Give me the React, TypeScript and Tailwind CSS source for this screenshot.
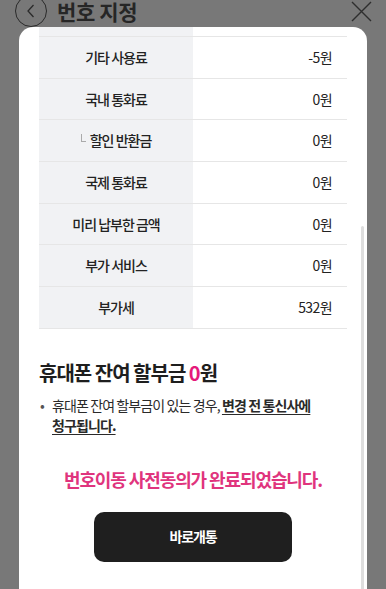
import React from "react";

const rows: { label: string; value: string; sub?: boolean }[] = [
  { label: "기타 사용료", value: "-5원" },
  { label: "국내 통화료", value: "0원" },
  { label: "할인 반환금", value: "0원", sub: true },
  { label: "국제 통화료", value: "0원" },
  { label: "미리 납부한 금액", value: "0원" },
  { label: "부가 서비스", value: "0원" },
  { label: "부가세", value: "532원" },
];

export default function App() {
  return (
    <div className="w-[386px] h-[589px] overflow-hidden bg-[#787878] font-['Noto_Sans_CJK_KR','Noto_Sans',sans-serif] text-[#222]">
      {/* page header under the dim overlay */}
      <div className="h-[22px] flex items-center pl-[15px] pr-[14px]">
        <div className="w-[32px] h-[32px] shrink-0 rounded-full border border-[#2a2a2a] flex items-center justify-center">
          <svg width="10" height="14" viewBox="0 0 10 14" fill="none">
            <path d="M7.5 1L2 7l5.5 6" stroke="#2a2a2a" strokeWidth="1.3" />
          </svg>
        </div>
        <div className="ml-[10px] text-[21px] font-bold tracking-[-0.4px] text-[#262626] leading-none">
          번호 지정
        </div>
        <div className="ml-auto">
          <svg width="21" height="21" viewBox="0 0 21 21" fill="none">
            <path d="M1 1l19 19M20 1L1 20" stroke="#2e2e2e" strokeWidth="1.4" />
          </svg>
        </div>
      </div>

      {/* modal */}
      <div className="relative mt-[5px] mx-[19px] h-[600px] rounded-t-[14px] bg-white px-[20px]">
        <div className="absolute right-[3px] top-[199px] w-[3px] h-[400px] rounded-full bg-[#dedede]" />

        {/* table (scrolled) */}
        <div className="flex h-[10px] border-b border-[#e6e6e6]">
          <div className="w-[154px] bg-[#f1f2f4]" />
          <div className="flex-1" />
        </div>
        {rows.map((r) => (
          <div key={r.label} className="flex h-[41.7px] border-b border-[#e6e6e6]">
            <div className="w-[154px] bg-[#f1f2f4] flex items-center justify-center text-[14px] font-medium tracking-[-1px]">
              {r.sub && (
                <span className="inline-block w-[5px] h-[8px] border-l border-b border-[#aaa] mr-[4px] -mt-[6px]" />
              )}
              {r.label}
            </div>
            <div className="flex-1 flex items-center justify-end pr-[15px] text-[14px] tracking-[-0.6px] text-[#222]">
              {r.value}
            </div>
          </div>
        ))}

        {/* installment */}
        <div className="mt-[31px] text-[20px] leading-[26px] font-bold tracking-[-1px] text-[#1e1e1e]">
          휴대폰 잔여 할부금 <span className="text-[#e5197a]">0</span>원
        </div>
        <div className="mt-[9px] flex text-[14px] leading-[20px] tracking-[-0.9px] text-[#2a2a2a]">
          <span className="w-[13px] shrink-0 pl-[1px] text-[#555]">•</span>
          <p>
            휴대폰 잔여 할부금이 있는 경우,{" "}
            <span className="font-bold underline underline-offset-[3px]">
              변경 전 통신사에
              <br />
              청구됩니다.
            </span>
          </p>
        </div>

        <div className="mt-[32px] text-center text-[18px] leading-[24px] font-bold tracking-[-1.1px] text-[#e0347d]">
          번호이동 사전동의가 완료되었습니다.
        </div>

        <div className="mt-[21px] mx-auto w-[198px] h-[50px] rounded-[10px] bg-[#1f1f1f] flex items-center justify-center text-white text-[14px] font-bold tracking-[-1.1px]">
          바로개통
        </div>
      </div>
    </div>
  );
}
